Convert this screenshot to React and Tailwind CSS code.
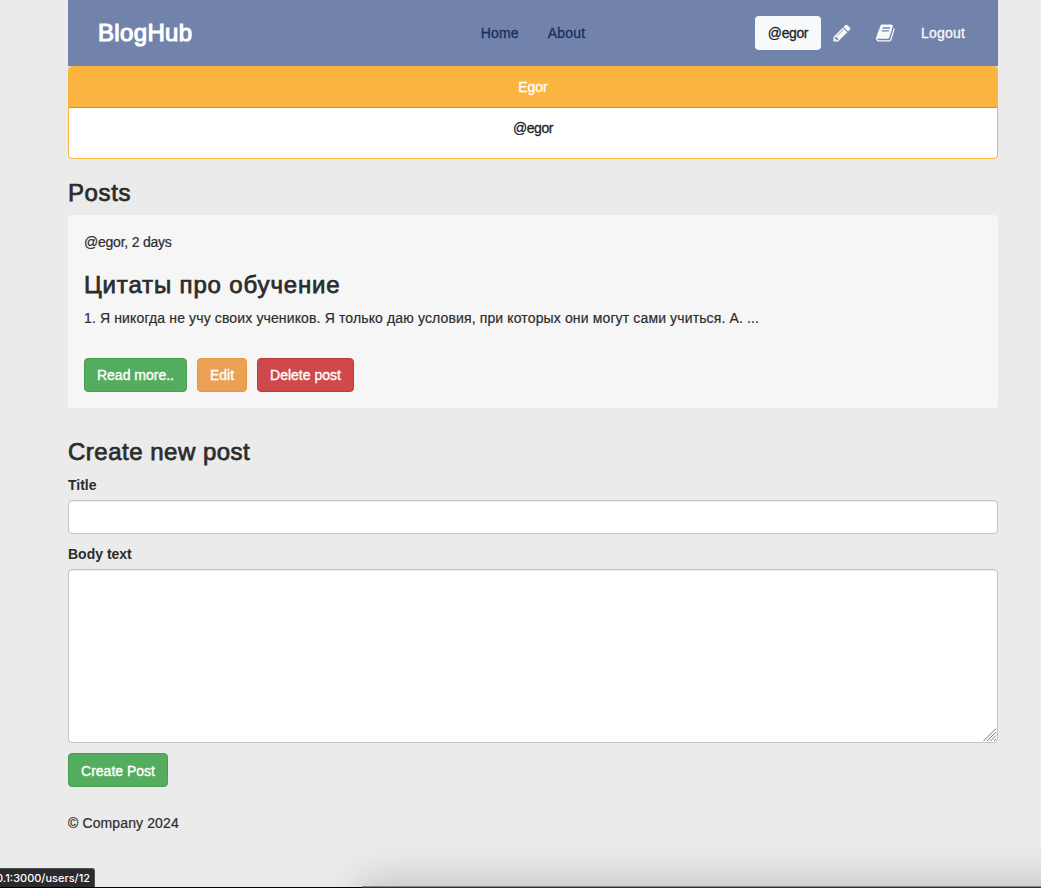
import React from "react";

const medium = "[-webkit-text-stroke:0.3px_currentColor]";
const heading = "text-2xl leading-[26px] [-webkit-text-stroke:0.75px_currentColor]";
const button = "h-[34px] rounded-[4px] border text-sm leading-5 text-white flex items-center justify-center whitespace-nowrap [-webkit-text-stroke:0.35px_currentColor]";

function Pencil() {
  return (
    <svg viewBox="0 0 1792 1792" className="size-5 shrink-0" fill="currentColor">
      <path d="M491 1536l91-91-235-235-91 91v107h128v128h107zm523-928q0-22-22-22-10 0-17 7l-542 542q-7 7-7 17 0 22 22 22 10 0 17-7l542-542q7-7 7-17zm-54-192l416 416-832 832h-416v-416zm683 96q0 53-37 90l-166 166-416-416 166-165q36-38 90-38 53 0 91 38l235 234q37 39 37 91z" />
    </svg>
  );
}

function Book() {
  return (
    <svg viewBox="0 0 1792 1792" className="size-5 shrink-0" fill="currentColor">
      <path d="M1639 478q40 57 18 129l-275 906q-19 64-76.5 107.5t-122.5 43.5h-923q-77 0-148.5-53.5t-99.5-131.5q-24-67-2-127 0-4 3-27t4-37q1-8-3-21.5t-3-19.5q2-11 8-21t16.5-23.5 16.5-23.5q23-38 45-91.5t30-91.5q3-10 .5-30t-.5-28q3-11 17-28t17-23q21-36 42-92t25-90q1-9-2.5-32t.5-28q4-13 22-30.5t22-22.5q19-26 42.5-84.5t27.5-96.5q1-8-3-25.5t-2-26.5q2-8 9-18t18-23 17-21q8-12 16.5-30.5t15-35 16-36 19.5-32 26.5-23.5 36-11.5 47.5 5.5l-1 3q38-9 51-9h761q74 0 114 56t18 130l-274 906q-36 119-71.5 153.5t-128.5 34.5h-869q-27 0-38 15-11 16-1 43 24 70 144 70h923q29 0 56-15.5t35-41.5l300-987q7-22 5-57 38 15 59 43zm-1064 2q-4 13 2 22.5t20 9.5h608q13 0 25.5-9.5t16.5-22.5l21-64q4-13-2-22.5t-20-9.5h-608q-13 0-25.5 9.5t-16.5 22.5zm-83 256q-4 13 2 22.5t20 9.5h608q13 0 25.5-9.5t16.5-22.5l21-64q4-13-2-22.5t-20-9.5h-608q-13 0-25.5 9.5t-16.5 22.5z" />
    </svg>
  );
}

function Header() {
  return (
    <header className="grid h-[66px] grid-cols-3 items-center bg-[#7183ab] px-[30px] text-sm">
      <a className="text-2xl leading-[26px] tracking-[0.35px] text-white [-webkit-text-stroke:1.1px_currentColor]">BlogHub</a>
      <nav className={`flex justify-center gap-[29px] tracking-[0.2px] text-[#15305f] ${medium}`}>
        <a>Home</a>
        <a>About</a>
      </nav>
      <div className={`flex items-center justify-end pr-[3px] text-[#f8f9fa] ${medium}`}>
        <a className="mr-[11px] flex h-[34px] w-[66px] items-center justify-center rounded-[4px] bg-[#f8f9fa] tracking-[-0.4px] text-[#212529]">@egor</a>
        <Pencil />
        <span className="ml-[24px] mr-[25px] flex"><Book /></span>
        <a className="tracking-[0.2px]">Logout</a>
      </div>
    </header>
  );
}

export default function App() {
  return (
    <div className="relative h-[888px] w-[1041px] overflow-hidden bg-[#ebebeb] font-['Liberation_Sans',Arial,sans-serif] text-sm leading-5 text-[#2c2c2c]">
      <main className="ml-[68px] flex w-[930px] flex-col">
        <Header />
        <section className="h-[93px] rounded-[4px] border border-[#fbb440] bg-white text-center">
          <h2 className={`flex h-[41px] items-center justify-center border-b border-[#c98f33] bg-[#fbb440] text-sm text-white ${medium}`}>Egor</h2>
          <p className={`pt-[10px] tracking-[-0.4px] text-[#212529] ${medium}`}>@egor</p>
        </section>

        <h2 className={`mt-[21px] tracking-[0.6px] ${heading}`}>Posts</h2>
        <article className="mt-[9px] h-[193px] rounded-[4px] bg-[#f6f6f6] px-4 pt-[17px]">
          <p className="tracking-[-0.22px] [-webkit-text-stroke:0.2px_currentColor]">@egor, 2 days</p>
          <h3 className={`mt-5 tracking-[0.85px] ${heading}`}>Цитаты про обучение</h3>
          <p className="mt-[10px] tracking-[0.135px] [-webkit-text-stroke:0.2px_currentColor]">1. Я никогда не учу своих учеников. Я только даю условия, при которых они могут сами учиться. А. ...</p>
          <div className="mt-[30px] flex gap-[10px]">
            <button className={`w-[103px] border-[#46a04f] bg-[#54ac5e] ${button}`}>Read more..</button>
            <button className={`w-[50px] border-[#e8963f] bg-[#eaa156] ${button}`}>Edit</button>
            <button className={`w-[97px] border-[#bf3a3d] bg-[#cf484a] ${button}`}>Delete post</button>
          </div>
        </article>

        <h2 className={`mt-[31px] tracking-[0.5px] ${heading}`}>Create new post</h2>
        <form className="flex flex-col items-start">
          <label className="mt-[10px] font-bold">Title</label>
          <input className="mt-[5px] h-[34px] w-full rounded-[4px] border border-[#c4c4c4] bg-white px-3 shadow-[inset_0_1px_1px_rgba(0,0,0,0.075)] outline-none" />
          <label className="mt-[10px] font-bold">Body text</label>
          <div className="mt-[5px] flex h-[174px] w-full rounded-[4px] border border-[#c4c4c4] bg-white shadow-[inset_0_1px_1px_rgba(0,0,0,0.075)]">
            <textarea className="h-full min-w-0 flex-1 resize-none bg-transparent px-3 py-[6px] outline-none" />
            <svg viewBox="0 0 15 15" className="size-[15px] self-end" stroke="#777" strokeWidth="1" fill="none">
              <path d="M1.5 14L14 1.5M5 14L14 5M8.5 14L14 8.5M12 14L14 12" />
            </svg>
          </div>
          <button type="button" className={`mt-[10px] w-[100px] border-[#46a04f] bg-[#54ac5e] pt-[2px] ${button}`}>Create Post</button>
        </form>
        <footer className="mt-[26px] tracking-[0.12px] [-webkit-text-stroke:0.2px_currentColor]">© Company 2024</footer>
      </main>

      <div className="absolute bottom-0 left-0 h-[66px] w-full overflow-hidden">
        <div className="absolute left-[362px] top-[66px] h-10 w-[800px] rounded-[10px] shadow-[0_0_44px_2px_rgba(0,0,0,0.24)]" />
        <div className="absolute bottom-0 left-0 h-px w-[362px] bg-black" />
        <div className="absolute bottom-0 right-0 h-[2px] w-[679px] border-t border-[#8a8a8a] bg-[#2e2c2e]" />
      </div>
      <div className="absolute bottom-px left-0 flex h-[19px] w-[95px] items-center justify-end overflow-hidden rounded-tr-[3px] border-r border-t border-[#505054] bg-[#2b2b2e] pr-[4px] font-['Inter',sans-serif] text-[11px] font-medium text-white">
        <span className="whitespace-nowrap">0.1:3000/users/12</span>
      </div>
    </div>
  );
}
